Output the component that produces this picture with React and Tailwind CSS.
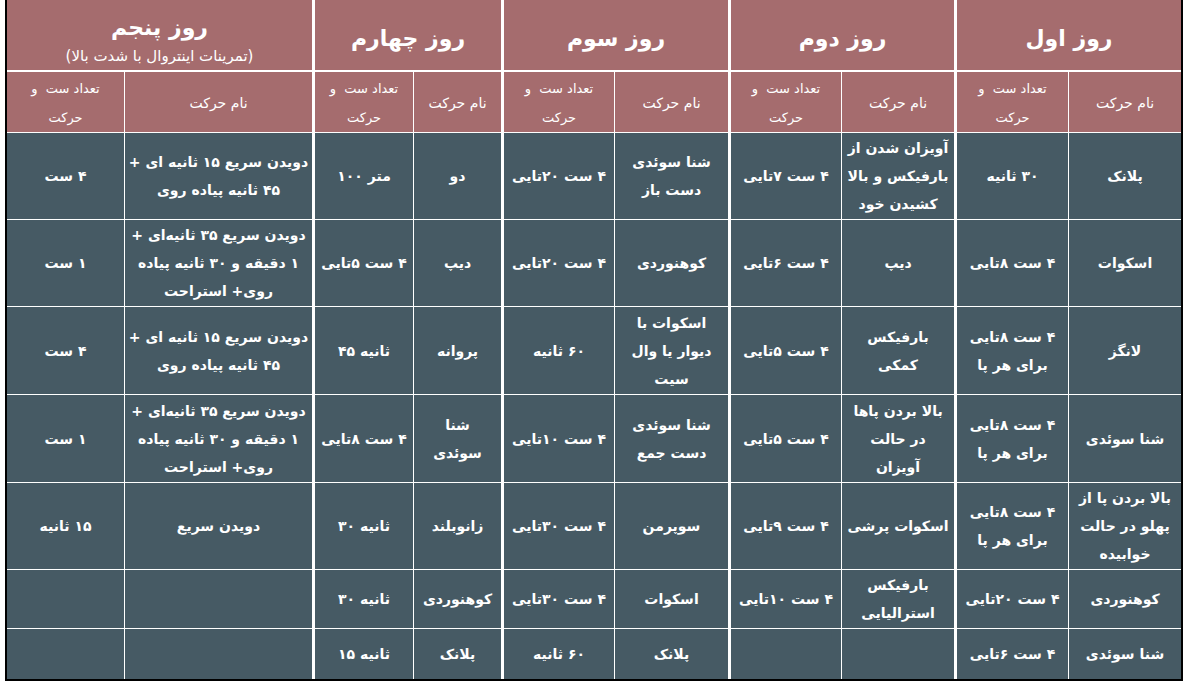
import React from 'react';

const COLS = 'grid-cols-[113px_114px_113px_113px_114px_113px_88px_101px_188px_117px]';

const days = [
  { title: 'روز اول' },
  { title: 'روز دوم' },
  { title: 'روز سوم' },
  { title: 'روز چهارم' },
  { title: 'روز پنجم', sub: '(تمرینات اینتروال با شدت بالا)' },
];

// each row: [name, sets] for day 1..5 (right to left); a string with | breaks lines
const rows = [
  {
    h: 'h-[88px]',
    cells: [
      ['پلانک', '۳۰ ثانیه'],
      ['آویزان شدن از|بارفیکس و بالا|کشیدن خود', '۴ ست ۷تایی'],
      ['شنا سوئدی|دست باز', '۴ ست ۲۰تایی'],
      ['دو', 'متر ۱۰۰'],
      ['دویدن سریع ۱۵ ثانیه ای +|۴۵ ثانیه پیاده روی', '۴ ست'],
    ],
  },
  {
    h: 'h-[87px]',
    cells: [
      ['اسکوات', '۴ ست ۸تایی'],
      ['دیپ', '۴ ست ۶تایی'],
      ['کوهنوردی', '۴ ست ۲۰تایی'],
      ['دیپ', '۴ ست ۵تایی'],
      ['دویدن سریع ۳۵ ثانیه‌ای +|۱ دقیقه و ۳۰ ثانیه پیاده|روی+ استراحت', '۱ ست'],
    ],
  },
  {
    h: 'h-[88px]',
    cells: [
      ['لانگز', '۴ ست ۸تایی|برای هر پا'],
      ['بارفیکس|کمکی', '۴ ست ۵تایی'],
      ['اسکوات با|دیوار یا وال|سیت', '۶۰ ثانیه'],
      ['پروانه', 'ثانیه ۴۵'],
      ['دویدن سریع ۱۵ ثانیه ای +|۴۵ ثانیه پیاده روی', '۴ ست'],
    ],
  },
  {
    h: 'h-[88px]',
    cells: [
      ['شنا سوئدی', '۴ ست ۸تایی|برای هر پا'],
      ['بالا بردن پاها|در حالت|آویزان', '۴ ست ۵تایی'],
      ['شنا سوئدی|دست جمع', '۴ ست ۱۰تایی'],
      ['شنا|سوئدی', '۴ ست ۸تایی'],
      ['دویدن سریع ۳۵ ثانیه‌ای +|۱ دقیقه و ۳۰ ثانیه پیاده|روی+ استراحت', '۱ ست'],
    ],
  },
  {
    h: 'h-[87px]',
    cells: [
      ['بالا بردن پا از|پهلو در حالت|خوابیده', '۴ ست ۸تایی|برای هر پا'],
      ['اسکوات پرشی', '۴ ست ۹تایی'],
      ['سوپرمن', '۴ ست ۳۰تایی'],
      ['زانوبلند', 'ثانیه ۳۰'],
      ['دویدن سریع', '۱۵ ثانیه'],
    ],
  },
  {
    h: 'h-[59px]',
    cells: [
      ['کوهنوردی', '۴ ست ۲۰تایی'],
      ['بارفیکس|استرالیایی', '۴ ست ۱۰تایی'],
      ['اسکوات', '۴ ست ۳۰تایی'],
      ['کوهنوردی', 'ثانیه ۳۰'],
      ['', ''],
    ],
  },
  {
    h: 'h-[50px]',
    cells: [
      ['شنا سوئدی', '۴ ست ۶تایی'],
      ['', ''],
      ['پلانک', '۶۰ ثانیه'],
      ['پلانک', 'ثانیه ۱۵'],
      ['', ''],
    ],
  },
];

function Lines({ text }) {
  const parts = text.split('|');
  return (
    <span>
      {parts.map((p, i) => (
        <React.Fragment key={i}>
          {i > 0 && <br />}
          {p}
        </React.Fragment>
      ))}
    </span>
  );
}

export default function App() {
  return (
    <div className="w-[1185px] h-[682px] bg-white font-['DejaVu_Sans',sans-serif] text-white">
      <div dir="rtl" className="ml-[5px] w-[1178px] border-x-2 border-b-2 border-black">
        {/* day titles */}
        <div className={`grid ${COLS} h-[72px] bg-[#a56c6e]`}>
          {days.map((d, i) => (
            <div
              key={i}
              className={`col-span-2 flex flex-col items-center border-b-2 border-white ${
                i < 4 ? 'border-l-[3px] justify-center pt-[7px]' : 'pt-[13px]'
              }`}
            >
              <div className="text-[22px] font-bold leading-[30px]">{d.title}</div>
              {d.sub && <div className="text-[15px] leading-[26px]">{d.sub}</div>}
            </div>
          ))}
        </div>

        {/* column titles */}
        <div className={`grid ${COLS} h-[60px] bg-[#a56c6e] text-[13px] leading-[29px]`}>
          {days.map((d, i) => (
            <React.Fragment key={i}>
              <div className="flex items-center justify-center border-b border-l border-white pt-[2px] text-center text-[14px]">
                نام حرکت
              </div>
              <div
                className={`flex items-center justify-center border-b border-white pt-[2px] text-center ${
                  i < 4 ? 'border-l-[3px]' : ''
                }`}
              >
                <span>
                  تعداد ست&nbsp; و
                  <br />
                  حرکت
                </span>
              </div>
            </React.Fragment>
          ))}
        </div>

        {/* body */}
        {rows.map((r, ri) => (
          <div
            key={ri}
            className={`grid ${COLS} ${r.h} bg-[#465a64] text-[14px] font-bold leading-[28px]`}
          >
            {r.cells.map(([name, sets], di) => (
              <React.Fragment key={di}>
                <div
                  className={`flex items-center justify-center border-l border-white text-center ${
                    ri < rows.length - 1 ? 'border-b' : ''
                  }`}
                >
                  <Lines text={name} />
                </div>
                <div
                  className={`flex items-center justify-center border-white text-center ${
                    ri < rows.length - 1 ? 'border-b' : ''
                  } ${di < 4 ? 'border-l-[3px]' : ''}`}
                >
                  <Lines text={sets} />
                </div>
              </React.Fragment>
            ))}
          </div>
        ))}
      </div>
    </div>
  );
}
